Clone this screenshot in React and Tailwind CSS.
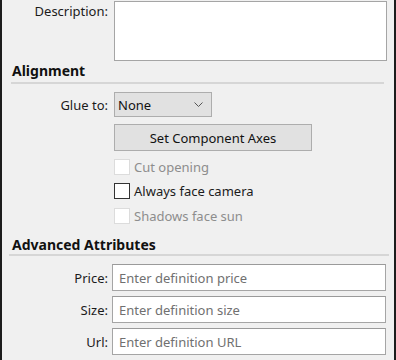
export default function App() {
  const font = { fontFamily: '"Noto Sans", "Open Sans", sans-serif' };
  const Label = ({ children, className = "" }) => (
    <div className={"w-[106px] shrink-0 text-right text-[13px] text-[#1b1b1b] " + className}>{children}</div>
  );
  const Check = ({ label, disabled }) => (
    <div className="flex items-center gap-[4px] h-[17px]">
      <div className={"w-[16px] h-[16px] bg-white border " + (disabled ? "border-[#dcdcdc]" : "border-[#333333]")} />
      <span className={"text-[13px] " + (disabled ? "text-[#8d8d8d]" : "text-[#1b1b1b]")}>{label}</span>
    </div>
  );
  const Input = ({ label, ph }) => (
    <div className="flex items-center">
      <Label className="mr-[6px]">{label}</Label>
      <div className="-ml-[2px] w-[274px] h-[27px] bg-white border border-[#a5a5a5] border-t-[#9a9a9a] flex items-center px-[6px] text-[13px] text-[#707070]">{ph}</div>
    </div>
  );
  return (
    <div style={font} className="w-[396px] h-[360px] bg-[#f0f0f0] border-l-2 border-r-2 border-[#1c1c1c] overflow-hidden leading-[18px]">
      <div className="flex pt-[1px]">
        <Label className="mr-[6px] pt-[1px]">Description:</Label>
        <div className="w-[273px] h-[60px] bg-white border border-[#a5a5a5]" />
      </div>
      <div className="ml-[9px] mr-[10px] mt-[1px]">
        <div className="text-[14px] font-bold text-[#111] pl-[1px] h-[18px]">Alignment</div>
        <div className="h-[2px] bg-[#d6d6d6] mt-[2px]" />
      </div>
      <div className="flex items-center mt-[8px]">
        <Label className="mr-[6px]">Glue to:</Label>
        <div className="w-[98px] h-[25px] bg-[#e1e1e1] border border-[#adadad] flex items-center justify-between pl-[3px] pr-[8px] text-[13px] text-[#111]">
          <span>None</span>
          <svg width="9" height="6" viewBox="0 0 9 6"><path d="M0.5 0.5 L4.5 4.5 L8.5 0.5" fill="none" stroke="#555" strokeWidth="1" /></svg>
        </div>
      </div>
      <div className="pl-[112px] mt-[7px]">
        <div className="w-[198px] h-[27px] bg-[#e1e1e1] border border-[#adadad] flex items-center justify-center text-[13px] text-[#111]">Set Component Axes</div>
      </div>
      <div className="pl-[112px] mt-[7px] flex flex-col">
        <Check label="Cut opening" disabled />
        <div className="h-[7px]" />
        <Check label="Always face camera" />
        <div className="h-[8px]" />
        <Check label="Shadows face sun" disabled />
      </div>
      <div className="ml-[7px] mr-[5px] mt-[12px]">
        <div className="text-[14px] font-bold text-[#111] pl-[3px] h-[18px]">Advanced Attributes</div>
        <div className="h-[2px] bg-[#d6d6d6]" />
      </div>
      <div className="flex flex-col gap-[5px] mt-[8px]">
        <Input label="Price:" ph="Enter definition price" />
        <Input label="Size:" ph="Enter definition size" />
        <Input label="Url:" ph="Enter definition URL" />
      </div>
    </div>
  );
}
